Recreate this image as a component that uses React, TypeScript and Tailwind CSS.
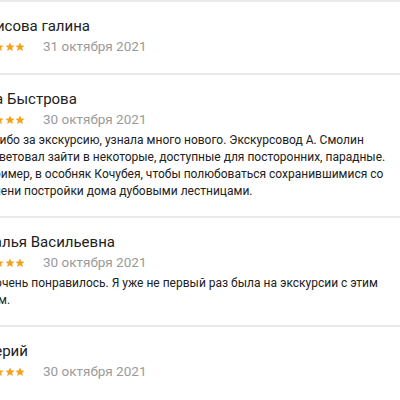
import React from "react";

function Star() {
  return (
    <svg width="10" height="10" viewBox="0 0 24 24" className="shrink-0">
      <path
        fill="#f5a11c"
        d="M12 1l3.2 7.2 7.8.7-5.9 5.1 1.8 7.7L12 17.6l-6.9 4.1 1.8-7.7L1 8.9l7.8-.7z"
      />
    </svg>
  );
}

type Review = { name: string; date: string; lines: string[] };

const reviews: Review[] = [
  { name: "Денисова галина", date: "31 октября 2021", lines: [] },
  {
    name: "Анна Быстрова",
    date: "30 октября 2021",
    lines: [
      "Спасибо за экскурсию, узнала много нового. Экскурсовод А. Смолин",
      "посоветовал зайти в некоторые, доступные для посторонних, парадные.",
      "Например, в особняк Кочубея, чтобы полюбоваться сохранившимися со",
      "времени постройки дома дубовыми лестницами.",
    ],
  },
  {
    name: "Наталья Васильевна",
    date: "30 октября 2021",
    lines: [
      "Всё очень понравилось. Я уже не первый раз была на экскурсии с этим",
      "гидом.",
    ],
  },
  { name: "Валерий", date: "30 октября 2021", lines: [] },
];

export default function App() {
  return (
    <div
      className="w-[400px] h-[400px] overflow-hidden bg-white"
      style={{ fontFamily: "Roboto, 'Noto Sans', sans-serif" }}
    >
      <div className="-ml-[32px] w-[480px]">
        {reviews.map((r, i) => (
          <div key={i} className="border-t-2 border-[#e9e9e9] pt-[14px] pb-[16px]">
            <div className="text-[15px] leading-[20px] text-[#212121] whitespace-nowrap">
              {r.name}
            </div>
            <div className="flex items-center h-[21px] ml-[5px]">
              <div className="flex gap-[0.5px]">
                <Star />
                <Star />
                <Star />
                <Star />
                <Star />
              </div>
              <span className="ml-[18px] text-[13.5px] leading-[21px] text-[#9a9a9a] whitespace-nowrap">
                {r.date}
              </span>
            </div>
            {r.lines.length > 0 && (
              <div className="mt-[2px] ml-[4px] text-[12px] leading-[17px] text-[#212121] whitespace-nowrap">
                {r.lines.map((l, j) => (
                  <div key={j}>{l}</div>
                ))}
              </div>
            )}
          </div>
        ))}
      </div>
    </div>
  );
}
